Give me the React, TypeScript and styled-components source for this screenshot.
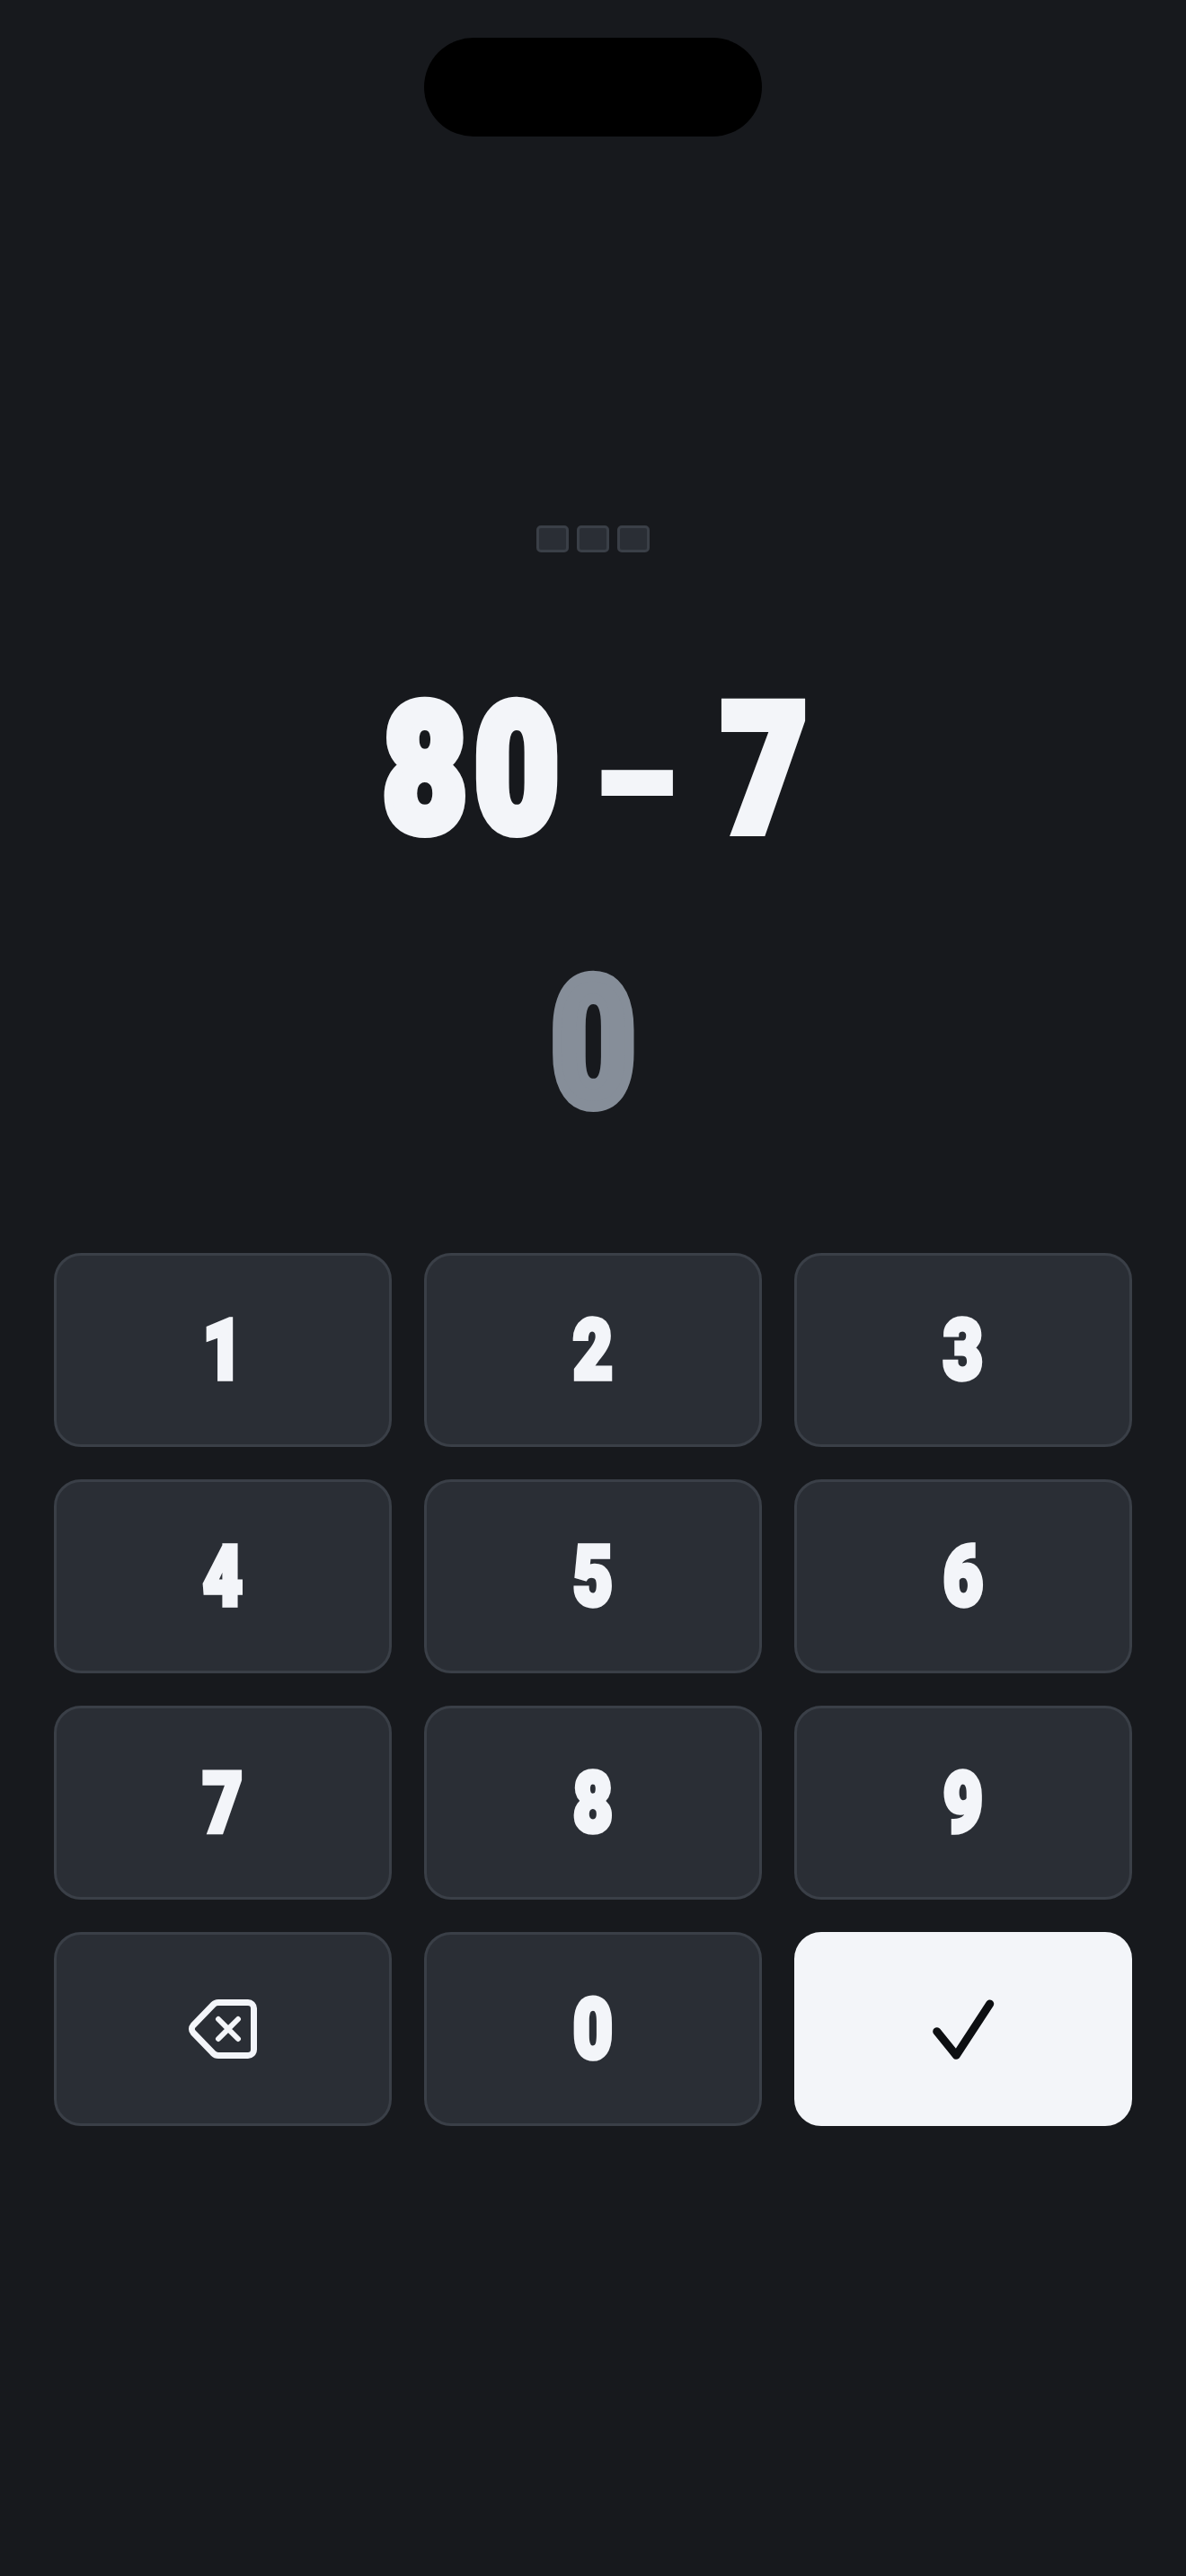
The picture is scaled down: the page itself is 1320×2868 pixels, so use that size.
import React from "react";
import styled, { createGlobalStyle } from "styled-components";

const GlobalStyle = createGlobalStyle`
  html, body {
    margin: 0;
    padding: 0;
    background: #17191d;
  }
`;

const Screen = styled.div`
  width: 1320px;
  height: 2868px;
  background: #17191d;
  display: flex;
  flex-direction: column;
  align-items: center;
  overflow: hidden;
`;

const Notch = styled.div`
  width: 376px;
  height: 110px;
  margin-top: 42px;
  border-radius: 55px;
  background: #000;
`;

const Progress = styled.div`
  display: flex;
  gap: 9px;
  margin-top: 433px;
`;

const Pip = styled.div`
  width: 36px;
  height: 30px;
  box-sizing: border-box;
  border: 3px solid #3a3f47;
  border-radius: 5px;
  background: #2a2e35;
`;

// heavy condensed numerals: Roboto Black squeezed and thickened
const Heavy = styled.div<{ $color: string; $size: number; $stroke: number }>`
  font-family: Roboto, "Liberation Sans", sans-serif;
  font-weight: 900;
  font-size: ${(p) => p.$size}px;
  line-height: 1;
  color: ${(p) => p.$color};
  -webkit-text-stroke: ${(p) => p.$stroke}px ${(p) => p.$color};
  white-space: pre;
  transform: scaleX(0.82);
`;

const Dash = styled.span`
  font-size: 176px;
  -webkit-text-stroke-width: 6px;
  vertical-align: -8px;
  margin: 0 8px 0 -8px;
`;

const Question = styled.div`
  height: 170px;
  margin-top: 159px;
  padding-left: 12px;
  display: flex;
  align-items: center;
  justify-content: center;
  letter-spacing: 10px;
  word-spacing: -13px;
`;

const Answer = styled.div`
  height: 170px;
  margin-top: 133px;
  display: flex;
  align-items: center;
  justify-content: center;
`;

const Keypad = styled.div`
  display: grid;
  grid-template-columns: repeat(3, 376px);
  grid-auto-rows: 216px;
  gap: 36px;
  margin-top: 148px;
`;

const Key = styled.button<{ $primary?: boolean }>`
  box-sizing: border-box;
  padding: 0;
  display: flex;
  align-items: center;
  justify-content: center;
  border: 3px solid ${(p) => (p.$primary ? "#f3f5f9" : "#3a3f47")};
  border-radius: 30px;
  background: ${(p) => (p.$primary ? "#f3f5f9" : "#2a2e35")};
`;

const keys = ["1", "2", "3", "4", "5", "6", "7", "8", "9"];

export default function App() {
  return (
    <Screen>
      <GlobalStyle />
      <Notch />
      <Progress>
        <Pip />
        <Pip />
        <Pip />
      </Progress>
      <Question>
        <Heavy $color="#f3f5f9" $size={198} $stroke={12}>80 <Dash>–</Dash> 7</Heavy>
      </Question>
      <Answer>
        <Heavy $color="#868e99" $size={198} $stroke={12}>0</Heavy>
      </Answer>
      <Keypad>
        {keys.map((k) => (
          <Key key={k}>
            <Heavy $color="#f3f5f9" $size={93} $stroke={5.5}>{k}</Heavy>
          </Key>
        ))}
        <Key>
          <svg width="84" height="72" viewBox="0 0 84 72" fill="none" stroke="#f3f5f9" strokeLinecap="round" strokeLinejoin="round">
            <path strokeWidth="7" d="M37 6.5H70a6.5 6.5 0 0 1 6.5 6.5V59a6.5 6.5 0 0 1-6.5 6.5H37a8 8 0 0 1-5.8-2.5L9 40a6 6 0 0 1 0-8L31.2 9a8 8 0 0 1 5.8-2.5Z" />
            <path strokeWidth="6" d="M37 25L59 47M59 25L37 47" />
          </svg>
        </Key>
        <Key>
          <Heavy $color="#f3f5f9" $size={93} $stroke={5.5}>0</Heavy>
        </Key>
        <Key $primary>
          <svg width="72" height="72" viewBox="0 0 72 72" fill="none" stroke="#0d0f12" strokeWidth="9" strokeLinecap="round" strokeLinejoin="round">
            <path d="M6.7 38.7L28.3 65.3L65.7 8" />
          </svg>
        </Key>
      </Keypad>
    </Screen>
  );
}
